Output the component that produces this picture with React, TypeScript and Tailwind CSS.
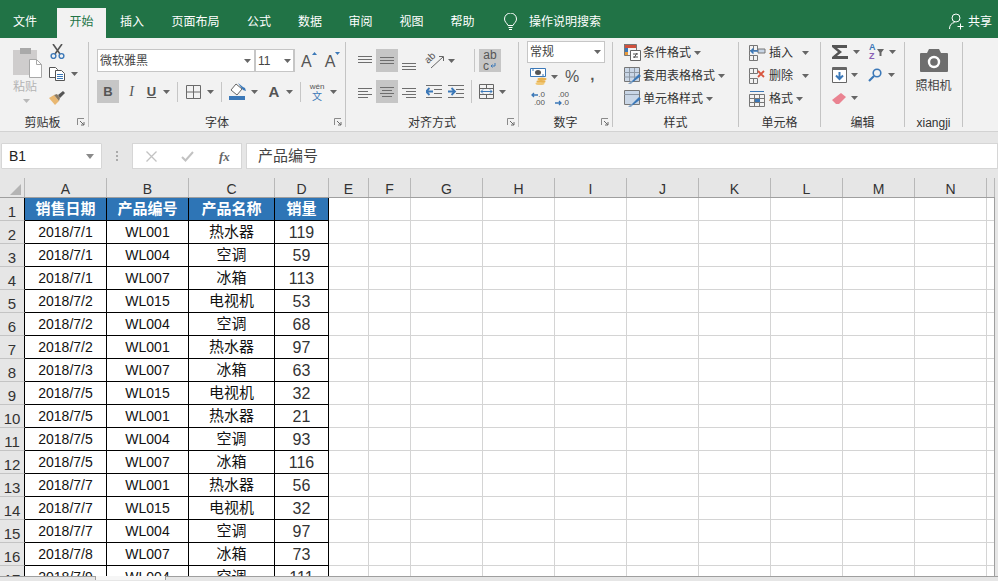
import type { ReactNode } from "react";

const BLUE = "#3b78b8";
const GREY = "#666666";

const ROWS: [string, string, string, number][] = [
  ["2018/7/1", "WL001", "热水器", 119],
  ["2018/7/1", "WL004", "空调", 59],
  ["2018/7/1", "WL007", "冰箱", 113],
  ["2018/7/2", "WL015", "电视机", 53],
  ["2018/7/2", "WL004", "空调", 68],
  ["2018/7/2", "WL001", "热水器", 97],
  ["2018/7/3", "WL007", "冰箱", 63],
  ["2018/7/5", "WL015", "电视机", 32],
  ["2018/7/5", "WL001", "热水器", 21],
  ["2018/7/5", "WL004", "空调", 93],
  ["2018/7/5", "WL007", "冰箱", 116],
  ["2018/7/7", "WL001", "热水器", 56],
  ["2018/7/7", "WL015", "电视机", 32],
  ["2018/7/7", "WL004", "空调", 97],
  ["2018/7/8", "WL007", "冰箱", 73],
  ["2018/7/9", "WL004", "空调", 111],
];

const EMPTY_COLS = [
  { name: "E", cls: "w-[40px]" },
  { name: "F", cls: "w-[42px]" },
  { name: "G", cls: "w-[72px]" },
  { name: "H", cls: "w-[72px]" },
  { name: "I", cls: "w-[72px]" },
  { name: "J", cls: "w-[72px]" },
  { name: "K", cls: "w-[72px]" },
  { name: "L", cls: "w-[72px]" },
  { name: "M", cls: "w-[72px]" },
  { name: "N", cls: "w-[72px]" },
  { name: "", cls: "w-[8px]" },
];

const TABLE_COLS = [
  { name: "A", cls: "w-[82px]" },
  { name: "B", cls: "w-[82px]" },
  { name: "C", cls: "w-[86px]" },
  { name: "D", cls: "w-[54px]" },
];

function Caret({ className = "" }: { className?: string }) {
  return (
    <svg width="7" height="4" viewBox="0 0 7 4" className={`shrink-0 ${className}`}>
      <path d="M0 0h7L3.5 4z" fill={GREY} />
    </svg>
  );
}

function Launcher() {
  return (
    <svg width="8" height="8" viewBox="0 0 8 8" className="absolute right-[3px] bottom-[1px]">
      <path d="M.5 7V.5H7" fill="none" stroke="#8a8a8a" />
      <path d="M3 3l4 4M4 7h3V4" fill="none" stroke="#6a6a6a" />
    </svg>
  );
}

function Group({ label, launcher, className, children }: { label: string; launcher?: boolean; className: string; children: ReactNode }) {
  return (
    <div className={`relative flex h-[85px] shrink-0 flex-col border-r border-[#c4c4c4] ${className}`}>
      <div className="h-[72px]">{children}</div>
      <div className="h-[13px] text-center text-xs leading-[18px] text-[#333]">{label}</div>
      {launcher && <Launcher />}
    </div>
  );
}

// horizontal rules used by the alignment icons
function Lines({ rows, w = 15, h = 12 }: { rows: [number, number, number][]; w?: number; h?: number }) {
  return (
    <svg width={w} height={h} viewBox={`0 0 ${w} ${h}`} className="shrink-0">
      {rows.map(([x1, x2, y], i) => (
        <path key={i} d={`M${x1} ${y + 0.5}H${x2}`} stroke="#6e6e6e" />
      ))}
    </svg>
  );
}

function Paste() {
  return (
    <svg width="29" height="32" viewBox="0 0 29 32">
      <path d="M0 4h9V2h8v2h7v25H0z" fill="#cfcdcd" />
      <path d="M7 2h11v6H7z" fill="#a9a9a9" />
      <path d="M16.500 13.500h7l5 5v13h-12z" fill="#fff" stroke="#a8a8a8" />
      <path d="M23.500 13.500v5h5" fill="none" stroke="#a8a8a8" />
    </svg>
  );
}

function Scissors() {
  return (
    <svg width="15" height="15" viewBox="0 0 15 15" fill="none">
      <path d="M3 0l7 10M12 0L5 10" stroke="#555" strokeWidth="1.600" />
      <circle cx="3.500" cy="12" r="2.400" stroke={BLUE} strokeWidth="1.400" />
      <circle cx="11.500" cy="12" r="2.400" stroke={BLUE} strokeWidth="1.400" />
    </svg>
  );
}

function CopyIcon() {
  return (
    <svg width="16" height="14" viewBox="0 0 16 14" fill="none">
      <path d="M.5.500h6l2 2v8h-8z" fill="#fff" stroke="#555" />
      <path d="M6.500 3.500h6l3 3v7h-9z" fill="#fff" stroke="#555" />
      <path d="M8 7.500h6M8 9.500h6M8 11.500h6" stroke={BLUE} />
    </svg>
  );
}

function Brush() {
  return (
    <svg width="16" height="14" viewBox="0 0 16 14">
      <path d="M0 7l5-3 5 6-4 4z" fill="#e9b872" />
      <path d="M5 4l3-1 3 4-1 3z" fill="#8a7a63" />
      <path d="M9 4l5-4 2 2-5 5z" fill="#555" />
    </svg>
  );
}

function GrowFont({ up }: { up: boolean }) {
  return (
    <span className="flex items-start">
      <span className="mt-[2px] text-[16px] leading-[20px] text-[#555]">A</span>
      <svg width="5" height="3" viewBox="0 0 5 3" className="mt-[2px]">
        <path d={up ? "M2.500 0L5 3H0z" : "M0 0h5L2.500 3z"} fill={BLUE} />
      </svg>
    </span>
  );
}

function BorderIcon() {
  return (
    <svg width="15" height="14" viewBox="0 0 15 14" fill="none" stroke="#6a6a6a">
      <path d="M.5.500h14v13H.5zM7.500 0v14M0 7h15" />
    </svg>
  );
}

function FillIcon() {
  return (
    <svg width="17" height="17" viewBox="0 0 17 17">
      <path d="M7 1l6 5-5 6-6-5z" fill="#fff" stroke="#666" />
      <path d="M9 0l5 4 2 1 1 3-3-1-3-4z" fill={BLUE} />
      <path d="M0 13h16v4H0z" fill={BLUE} />
    </svg>
  );
}

function Orientation() {
  return (
    <svg width="18" height="17" viewBox="0 0 18 17" fill="none" stroke="#666" className="overflow-visible">
      <text x="0" y="9" fontSize="10" transform="rotate(-42 5 8)" fill="#555" stroke="none" fontFamily="Liberation Sans">ab</text>
      <path d="M5 16L17 5M13 4.500h4.500V9" />
    </svg>
  );
}

function WrapText() {
  return (
    <span className="flex h-[23px] w-[22px] flex-col items-center justify-center bg-[#c6c6c6] text-[12px] leading-[11px] text-[#555]">
      <span>ab</span>
      <span className="flex w-[14px] items-center">
        c
        <svg width="6" height="6" viewBox="0 0 6 6" fill="none" className="ml-[1px]">
          <path d="M5 0v3H1M2.500 1.500L1 3l1.500 1.500" stroke={BLUE} />
        </svg>
      </span>
    </span>
  );
}

function IndentIcon({ out }: { out: boolean }) {
  const arrow = out ? "M0 6.500h7M3.500 3L0 6.500 3.500 10" : "M0 6.500h7M3.500 3L7 6.500 3.500 10";
  return (
    <svg width="16" height="13" viewBox="0 0 16 13" fill="none">
      <path d="M0 .5h16M8 4.500h8M8 8.500h8M0 12.500h16" stroke="#6e6e6e" />
      <path d={arrow} stroke={BLUE} strokeWidth="1.800" />
    </svg>
  );
}

function MergeIcon() {
  return (
    <svg width="15" height="15" viewBox="0 0 15 15" fill="none">
      <path d="M.5.500h14v14H.5zM0 4.500h15M0 10.500h15M7.500 0v4M7.500 11v4" stroke="#666" />
      <path d="M2 7.500h11M4 5.500l-2 2 2 2M11 5.500l2 2-2 2" stroke={BLUE} />
    </svg>
  );
}

function Accounting() {
  return (
    <svg width="18" height="17" viewBox="0 0 18 17">
      <path d="M.5.500h15v8H.5z" fill="#fff" stroke={BLUE} />
      <ellipse cx="8" cy="4.500" rx="3" ry="2.500" fill="#555" />
      <path d="M2 2h2M12 7h2" stroke={BLUE} />
      <ellipse cx="12" cy="11" rx="4.500" ry="1.500" fill="#e9b24f" />
      <ellipse cx="11" cy="13.500" rx="4.500" ry="1.500" fill="#e9b24f" />
      <ellipse cx="10" cy="15.500" rx="4.500" ry="1.500" fill="#f0c878" />
    </svg>
  );
}

function Decimal({ top, bottom, right }: { top: string; bottom: string; right: boolean }) {
  return (
    <span className="flex w-[16px] flex-col items-end text-[8px] leading-[8px] text-[#555]">
      <span className="flex items-center">
        {!right && (
          <svg width="7" height="6" viewBox="0 0 7 6" fill="none">
            <path d="M7 3H1M3 1L1 3l2 2" stroke={BLUE} strokeWidth="1.300" />
          </svg>
        )}
        {top}
      </span>
      <span className="flex items-center">
        {right && (
          <svg width="7" height="6" viewBox="0 0 7 6" fill="none">
            <path d="M0 3h6M4 1l2 2-2 2" stroke={BLUE} strokeWidth="1.300" />
          </svg>
        )}
        {bottom}
      </span>
    </span>
  );
}

function CondFormat() {
  return (
    <svg width="17" height="17" viewBox="0 0 17 17">
      <path d="M0 0h12v4H0z" fill="#d0503c" />
      <path d="M0 4h4v4H0z" fill={BLUE} />
      <path d="M0 8h4v3H0z" fill="#e99a3c" />
      <path d="M.5 .5h12v11H.5z" fill="none" stroke="#777" />
      <path d="M6.500 6.500h10v10h-10z" fill="#fff" stroke="#666" />
      <path d="M9 10h5M9 13h5M13 9l-3 5" stroke="#555" />
    </svg>
  );
}

function TableStyle({ cells }: { cells: boolean }) {
  return (
    <svg width="17" height="17" viewBox="0 0 17 17" fill="none">
      <path d="M1 1h14v13H1z" fill="#c9d6e6" />
      <path d="M.5.500h15v14H.5z" stroke="#777" />
      {cells && <path d="M0 5.500h15M0 10h15M5.500 1v13M10.500 1v13" stroke="#8d98a5" />}
      {!cells && <path d="M0 4.500h15" stroke="#8d98a5" />}
      <path d="M7 15l8-8 2 2-8 6z" fill={BLUE} />
      <path d="M4 17l3-3 2 1-2 2z" fill="#8aa8c8" />
    </svg>
  );
}

function CellIcon({ kind }: { kind: "insert" | "delete" | "format" }) {
  return (
    <svg width="17" height="16" viewBox="0 0 17 16" fill="none">
      {kind !== "format" && <path d="M.5.500h8v5h-8zM.5 10.500h8v5h-8zM4.500 1v4M4.500 11v4M.5 5.500v5" stroke="#777" />}
      {kind === "insert" && (
        <>
          <path d="M9 4h7v4H9z" fill="#c9d6e6" stroke="#777" />
          <path d="M9 6H2M4.500 3.500L2 6l2.500 2.500" stroke={BLUE} strokeWidth="1.500" />
        </>
      )}
      {kind === "delete" && <path d="M9 3l6 6M15 3L9 9" stroke="#d8563f" strokeWidth="1.800" />}
      {kind === "format" && (
        <>
          <path d="M.5 3.500h15v12H.5zM0 7.500h16M0 11.500h16M5.500 3v13M10.500 3v13" stroke="#777" />
          <path d="M6 8h5v3H6z" fill={BLUE} />
          <path d="M1 .5h14" stroke={BLUE} />
        </>
      )}
    </svg>
  );
}

function Sum() {
  return (
    <svg width="16" height="14" viewBox="0 0 16 14">
      <path d="M0 0h15v3H5l5 4-5 4h11v3H0v-2l6-5-6-5z" fill="#555" />
    </svg>
  );
}

function SortIcon() {
  return (
    <span className="flex items-center">
      <span className="flex flex-col text-[9px] font-bold leading-[9px]">
        <span className="text-[#3b78b8]">A</span>
        <span className="text-[#8a5fb5]">Z</span>
      </span>
      <svg width="7" height="7" viewBox="0 0 7 7" className="ml-[1px]">
        <path d="M0 0h7L4.500 3.500V7h-2V3.500z" fill="#666" />
      </svg>
    </span>
  );
}

function FillDown() {
  return (
    <svg width="15" height="16" viewBox="0 0 15 16" fill="none">
      <path d="M.5.500h14v15H.5z" fill="#fff" stroke="#666" />
      <path d="M0 1h15v2H0z" fill="#666" />
      <path d="M7.500 5v7M4 8.500l3.500 3.500L11 8.500" stroke={BLUE} strokeWidth="2" />
    </svg>
  );
}

function Find() {
  return (
    <svg width="14" height="14" viewBox="0 0 14 14" fill="none">
      <circle cx="9" cy="5" r="3.800" stroke={BLUE} strokeWidth="1.600" />
      <path d="M6 8l-5 5" stroke={BLUE} strokeWidth="2.200" />
    </svg>
  );
}

function Eraser() {
  return (
    <svg width="14" height="11" viewBox="0 0 14 11">
      <path d="M9 0l5 4-7 7H4L0 7z" fill="#ea8391" />
    </svg>
  );
}

function Camera() {
  return (
    <svg width="28" height="23" viewBox="0 0 28 23">
      <path d="M1 4h6l2-4h10l2 4h6a1 1 0 0 1 1 1v17a1 1 0 0 1-1 1H1a1 1 0 0 1-1-1V5a1 1 0 0 1 1-1z" fill="#6e6e6e" />
      <circle cx="14" cy="13" r="5" fill="none" stroke="#fff" strokeWidth="2.400" />
    </svg>
  );
}

function Ribbon() {
  return (
    <div className="flex h-[93px] bg-[#f2f2f2] pt-[4px]">
      <Group label="剪贴板" launcher className="w-[89px] pr-[3px]">
        <div className="flex">
          <div className="ml-[13px] flex w-[29px] flex-col pt-[4px]">
            <Paste />
            <span className="mt-[2px] text-xs leading-[14px] text-[#b4b4b4]">粘贴</span>
            <Caret className="mt-[5px] ml-[10px] opacity-40" />
          </div>
          <div className="ml-[7px] flex flex-col">
            <span className="mt-[2px] ml-[1px]"><Scissors /></span>
            <span className="mt-[8px] flex items-center">
              <CopyIcon />
              <Caret className="ml-[6px]" />
            </span>
            <span className="mt-[10px]"><Brush /></span>
          </div>
        </div>
      </Group>

      <Group label="字体" launcher className="w-[257px]">
        <div className="ml-[8px] mt-[7px] flex h-[23px] items-center">
          <div className="flex h-[23px] w-[157px] items-center border border-r-0 border-[#c6c6c6] bg-white pr-[3px] pl-[2px] text-xs text-[#444]">
            <span className="flex-1">微软雅黑</span>
            <Caret />
          </div>
          <div className="flex h-[23px] w-[41px] items-center border-2 border-y-[1px] border-[#c6c6c6] bg-white pr-[2px] pl-[2px] text-[12px] text-[#444]">
            <span className="flex-1">11</span>
            <Caret />
          </div>
          <span className="ml-[6px]"><GrowFont up /></span>
          <span className="ml-[8px]"><GrowFont up={false} /></span>
        </div>
        <div className="ml-[8px] mt-[8px] flex h-[23px] items-center text-[#555]">
          <span className="flex h-[23px] w-[22px] items-center justify-center bg-[#c6c6c6] text-[13px] font-bold">B</span>
          <span className="ml-[7px] w-[11px] text-center font-['Liberation_Serif'] text-[14px] italic">I</span>
          <span className="ml-[9px] w-[11px] text-center text-[13px] font-bold underline">U</span>
          <Caret className="ml-[6px]" />
          <span className="ml-[7px] h-[20px] w-px bg-[#c6c6c6]" />
          <span className="ml-[8px]"><BorderIcon /></span>
          <Caret className="ml-[6px]" />
          <span className="ml-[7px] h-[20px] w-px bg-[#c6c6c6]" />
          <span className="ml-[7px]"><FillIcon /></span>
          <Caret className="ml-[5px]" />
          <span className="ml-[10px] w-[12px] text-center text-[15px] font-bold leading-[18px]">A</span>
          <Caret className="ml-[6px]" />
          <span className="ml-[7px] h-[20px] w-px bg-[#c6c6c6]" />
          <span className="ml-[8px] flex w-[16px] flex-col items-center leading-[10px]">
            <span className="text-[8px] text-[#555]">wén</span>
            <span className="text-[10px] text-[#3b78b8]">文</span>
          </span>
          <Caret className="ml-[5px]" />
        </div>
      </Group>

      <Group label="对齐方式" launcher className="w-[173px]">
        <div className="ml-[12px] mt-[7px] flex h-[23px] items-center">
          <Lines rows={[[0, 14, 1], [0, 14, 4], [0, 14, 7]]} />
          <span className="ml-[3px] flex h-[23px] w-[22px] items-center justify-center bg-[#c6c6c6]">
            <Lines rows={[[0, 14, 2], [0, 14, 5], [0, 14, 8]]} />
          </span>
          <span className="ml-[4px] self-end"><Lines rows={[[0, 14, 2], [0, 14, 5], [0, 14, 8]]} h={11} /></span>
          <span className="ml-[9px]"><Orientation /></span>
          <Caret className="ml-[4px]" />
          <span className="ml-[19px] h-[23px] w-px bg-[#c6c6c6]" />
          <span className="ml-[4px]"><WrapText /></span>
        </div>
        <div className="ml-[12px] mt-[8px] flex h-[23px] items-center">
          <Lines rows={[[0, 14, 2], [0, 10, 5], [0, 14, 8], [0, 10, 11]]} />
          <span className="ml-[3px] flex h-[23px] w-[22px] items-center justify-center bg-[#c6c6c6]">
            <Lines rows={[[0, 14, 1], [2, 12, 4], [0, 14, 7], [2, 12, 10]]} />
          </span>
          <span className="ml-[4px]"><Lines rows={[[0, 14, 2], [4, 14, 5], [0, 14, 8], [4, 14, 11]]} /></span>
          <span className="ml-[9px]"><IndentIcon out /></span>
          <span className="ml-[6px]"><IndentIcon out={false} /></span>
          <span className="ml-[7px] h-[23px] w-px bg-[#c6c6c6]" />
          <span className="ml-[7px]"><MergeIcon /></span>
          <Caret className="ml-[5px]" />
        </div>
      </Group>

      <Group label="数字" launcher className="w-[94px]">
        <div className="ml-[8px] -mt-px flex h-[22px] w-[78px] items-center border border-[#c6c6c6] bg-white pr-[3px] pl-[2px] text-xs text-[#444]">
          <span className="flex-1">常规</span>
          <Caret />
        </div>
        <div className="ml-[11px] mt-[5px] flex h-[17px] items-center">
          <Accounting />
          <Caret className="ml-[3px]" />
          <span className="ml-[7px] text-[16px] leading-[17px] text-[#555]">%</span>
          <span className="ml-[11px] mb-[4px] text-[15px] font-bold leading-[17px] text-[#555]">,</span>
        </div>
        <div className="ml-[10px] mt-[6px] flex h-[16px] items-center">
          <Decimal top=".0" bottom=".00" right={false} />
          <span className="ml-[8px]"><Decimal top=".00" bottom=".0" right /></span>
        </div>
      </Group>

      <Group label="样式" className="w-[126px] text-xs text-[#333]">
        <div className="ml-[11px] flex flex-col gap-[6px] pt-[2px]">
          <span className="flex h-[17px] items-center">
            <CondFormat />
            <span className="ml-[2px]">条件格式</span>
            <Caret className="ml-[3px]" />
          </span>
          <span className="flex h-[17px] items-center">
            <TableStyle cells />
            <span className="ml-[2px]">套用表格格式</span>
            <Caret className="ml-[3px]" />
          </span>
          <span className="flex h-[17px] items-center">
            <TableStyle cells={false} />
            <span className="ml-[2px]">单元格样式</span>
            <Caret className="ml-[3px]" />
          </span>
        </div>
      </Group>

      <Group label="单元格" className="w-[82px] text-xs text-[#333]">
        <div className="ml-[10px] flex flex-col gap-[6px] pt-[2px]">
          <span className="flex h-[17px] items-center">
            <CellIcon kind="insert" />
            <span className="ml-[3px]">插入</span>
            <Caret className="ml-[9px]" />
          </span>
          <span className="flex h-[17px] items-center">
            <CellIcon kind="delete" />
            <span className="ml-[3px]">删除</span>
            <Caret className="ml-[9px]" />
          </span>
          <span className="flex h-[17px] items-center">
            <CellIcon kind="format" />
            <span className="ml-[3px]">格式</span>
            <Caret className="ml-[3px]" />
          </span>
        </div>
      </Group>

      <Group label="编辑" className="w-[84px]">
        <div className="ml-[11px] flex flex-col gap-[7px] pt-[2px]">
          <span className="flex h-[16px] items-center">
            <Sum />
            <Caret className="ml-[5px]" />
            <span className="ml-[9px] w-[19px]"><SortIcon /></span>
            <Caret className="ml-[1px]" />
          </span>
          <span className="flex h-[16px] items-center">
            <FillDown />
            <Caret className="ml-[4px]" />
            <span className="ml-[10px] w-[19px]"><Find /></span>
            <Caret className="ml-[1px]" />
          </span>
          <span className="flex h-[16px] items-center">
            <Eraser />
            <Caret className="ml-[5px]" />
          </span>
        </div>
      </Group>

      <Group label="xiangji" className="w-[58px]">
        <div className="flex flex-col items-center pt-[7px]">
          <Camera />
          <span className="mt-[7px] text-xs leading-[14px] text-[#444]">照相机</span>
        </div>
      </Group>
    </div>
  );
}

function TabBar() {
  const tabs = [
    { name: "插入", cls: "w-[52px]" },
    { name: "页面布局", cls: "w-[75px]" },
    { name: "公式", cls: "w-[52px]" },
    { name: "数据", cls: "w-[50px]" },
    { name: "审阅", cls: "w-[51px]" },
    { name: "视图", cls: "w-[51px]" },
    { name: "帮助", cls: "w-[51px]" },
  ];
  return (
    <div className="flex h-[38px] items-end bg-[#217346] text-xs text-white">
      <span className="mr-[7px] flex h-[30px] w-[50px] items-center justify-center pb-[3px]">文件</span>
      <span className="flex h-[30px] w-[49px] items-center justify-center bg-[#f2f2f2] pb-[3px] text-[#217346]">开始</span>
      {tabs.map((t) => (
        <span key={t.name} className={`flex h-[30px] items-center justify-center pb-[3px] ${t.cls}`}>
          {t.name}
        </span>
      ))}
      <span className="ml-[16px] flex h-[30px] items-center pb-[3px]">
        <svg width="13" height="18" viewBox="0 0 13 18" fill="none" stroke="#fff">
          <path d="M4 12.500C3 10 .5 9 .5 6a6 6 0 0 1 12 0c0 3-2.500 4-3.500 6.500zM4.500 14.500h4M5 16.500h3" />
        </svg>
        <span className="ml-[12px]">操作说明搜索</span>
      </span>
      <span className="ml-auto mr-[6px] flex h-[30px] items-center pb-[3px]">
        <svg width="15" height="17" viewBox="0 0 15 17" fill="none" stroke="#fff">
          <circle cx="7" cy="5" r="4" />
          <path d="M.5 16c0-4 2-6 5-6.500M11.500 10.500v6M8.500 13.500h6" />
        </svg>
        <span className="ml-[4px]">共享</span>
      </span>
    </div>
  );
}

function FormulaBar() {
  return (
    <div className="flex h-[47px] items-start border-t border-[#d2d2d2] bg-[#e6e6e6] pt-[11px]">
      <div className="ml-px flex h-[26px] w-[101px] items-center rounded-[1px] border border-[#d6d6d6] bg-white pr-[7px] pl-[7px] text-[14px] text-[#222]">
        <span className="flex-1">B1</span>
        <svg width="8" height="5" viewBox="0 0 8 5">
          <path d="M0 0h8L4 5z" fill="#8a8a8a" />
        </svg>
      </div>
      <span className="ml-[14px] mt-[8px] flex flex-col gap-[2px]">
        <span className="h-[2px] w-[2px] bg-[#aaa]" />
        <span className="h-[2px] w-[2px] bg-[#aaa]" />
        <span className="h-[2px] w-[2px] bg-[#aaa]" />
      </span>
      <div className="ml-[14px] flex h-[26px] w-[110px] items-center border border-[#d6d6d6] bg-white pl-[13px]">
        <svg width="11" height="11" viewBox="0 0 11 11" fill="none" stroke="#c2c2c2" strokeWidth="1.300">
          <path d="M.5.500l10 10M10.500.500l-10 10" />
        </svg>
        <svg width="13" height="11" viewBox="0 0 13 11" fill="none" stroke="#c2c2c2" strokeWidth="2" className="ml-[24px]">
          <path d="M1 6l3.500 3.500L12 1" />
        </svg>
        <span className="ml-[25px] font-['Liberation_Serif'] text-[13px] font-bold italic leading-none text-[#666]">fx</span>
      </div>
      <div className="ml-[4px] flex h-[26px] flex-1 items-center border border-[#d6d6d6] bg-white pl-[11px] text-[15px] text-[#444]">
        产品编号
      </div>
    </div>
  );
}

function ColHeaders() {
  return (
    <div className="flex h-[20px] w-[995px] border-b border-[#9f9f9f] text-[14px] leading-[16px] text-[#333]">
      <div className="flex w-[25px] shrink-0 items-end justify-end border-r border-[#b8b8b8] pr-[3px] pb-[2px]">
        <svg width="11" height="11" viewBox="0 0 11 11">
          <path d="M11 0v11H0z" fill="#b4b4b4" />
        </svg>
      </div>
      {[...TABLE_COLS, ...EMPTY_COLS].map((c) => (
        <div key={c.name || "end"} className={`shrink-0 border-r border-[#b8b8b8] pt-[3px] text-center ${c.cls}`}>
          {c.name}
        </div>
      ))}
    </div>
  );
}

function Sheet() {
  const rowCount = ROWS.length + 1;
  return (
    <div className="h-[378px] w-[995px] overflow-hidden border-r border-[#9f9f9f] bg-white text-[14px] text-[#111]">
      {Array.from({ length: rowCount }, (_, r) => {
        const row = r > 0 ? ROWS[r - 1] : null;
        const head = ["销售日期", "产品编号", "产品名称", "销量"];
        return (
          <div key={r} className="flex h-[23px]">
            <div className="flex w-[25px] shrink-0 items-end justify-center border-r border-b border-r-black border-b-[#c4c4c4] bg-[#e6e6e6] text-[15px] leading-[16px] text-[#333]">
              {r + 1}
            </div>
            {TABLE_COLS.map((c, i) =>
              row ? (
                <div key={c.name} className={`flex shrink-0 items-center justify-center border-r border-b border-black ${c.cls}`}>
                  <span className={i === 2 ? "text-[15px]" : i === 3 ? "pt-[2px] text-[16px] text-[#333]" : ""}>{row[i]}</span>
                </div>
              ) : (
                <div key={c.name} className={`flex shrink-0 items-center justify-center border-r border-b border-black bg-[#2e75b6] text-[15px] font-bold text-white ${c.cls}`}>
                  {head[i]}
                </div>
              ),
            )}
            {EMPTY_COLS.map((c) => (
              <div key={c.name || "end"} className={`shrink-0 border-r border-b border-[#d4d4d4] ${c.cls}`} />
            ))}
          </div>
        );
      })}
    </div>
  );
}

export default function App() {
  return (
    <div className="h-[581px] w-[998px] overflow-hidden bg-[#e6e6e6] [font-family:'Liberation_Sans','Noto_Sans_CJK_SC',sans-serif]">
      <TabBar />
      <Ribbon />
      <FormulaBar />
      <ColHeaders />
      <Sheet />
      <div className="flex h-[4px]">
        <div className="w-[96px] border-t border-r border-[#9f9f9f]" />
        <div className="w-[69px] bg-[#f6f6f6]" />
        <div className="flex-1 border-t border-l border-[#9f9f9f]" />
      </div>
    </div>
  );
}
